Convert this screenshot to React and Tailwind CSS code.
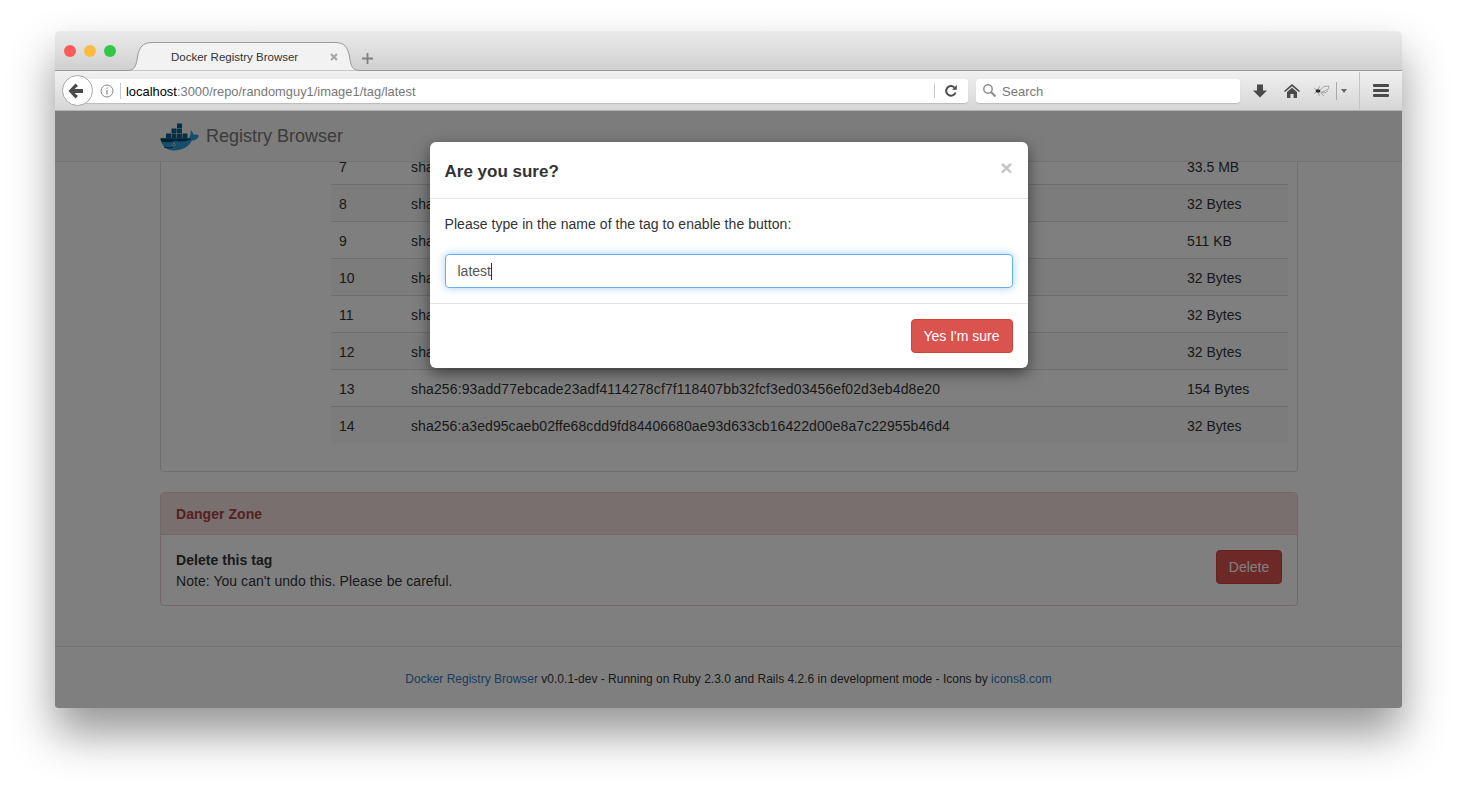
const rows = [
  { id: 7, hash: "sha", size: "33.5 MB", tracking: "tracking-[0.125px]" },
  { id: 8, hash: "sha", size: "32 Bytes", tracking: "tracking-[0.125px]" },
  { id: 9, hash: "sha", size: "511 KB", tracking: "tracking-[0.125px]" },
  { id: 10, hash: "sha", size: "32 Bytes", tracking: "tracking-[0.125px]" },
  { id: 11, hash: "sha", size: "32 Bytes", tracking: "tracking-[0.125px]" },
  { id: 12, hash: "sha", size: "32 Bytes", tracking: "tracking-[0.125px]" },
  { id: 13, hash: "sha256:93add77ebcade23adf4114278cf7f118407bb32fcf3ed03456ef02d3eb4d8e20", size: "154 Bytes", tracking: "tracking-[0.125px]" },
  { id: 14, hash: "sha256:a3ed95caeb02ffe68cdd9fd84406680ae93d633cb16422d00e8a7c22955b46d4", size: "32 Bytes", tracking: "tracking-[0.083px]" },
];

function DockerLogo() {
  return (
    <svg width="40" height="28" viewBox="0 0 40 28" className="mt-[1px]">
      <path d="M0.5 15 H29 C30.5 12.5 31 9.5 30.5 7 C32.5 8.5 33.5 10.5 33.5 12 C35.5 11.2 37.5 11.7 39 13 C37.5 16 35 17.5 32 17.5 C28.5 24 22 27.5 14 27.5 C6 27.5 1 22 0.5 15 Z" fill="#2a9fd8" />
      <path d="M0.5 15.5 H29 C30 15.5 31 16 31.5 16.5 C26 18.5 20 18.8 15 18 C10 19.5 5 19.5 1 18.5 Z" fill="#06405e" />
      <circle cx="14" cy="21.5" r="1.5" fill="#d8e6ee" />
      <circle cx="14" cy="21.5" r="0.7" fill="#06405e" />
      <path d="M4 24 C7 25 10 25 13 24.3" stroke="#06405e" strokeWidth="1" fill="none" />
      <path d="M17 0.5 H22 V5 H17 Z M11.5 5.5 H16.5 V10 H11.5 Z M17 5.5 H22 V10 H17 Z M6 10.5 H11 V15 H6 Z M11.5 10.5 H16.5 V15 H11.5 Z M17 10.5 H22 V15 H17 Z M22.5 10.5 H27.5 V15 H22.5 Z" fill="#0a5f8c" />
    </svg>
  );
}

function TabShape() {
  return (
    <svg className="absolute inset-0" width="237" height="29" viewBox="0 0 237 29">
      <path d="M0 28.5 H2 C10 28.5 11 24 12.5 15 C14 5 18 0.5 27 0.5 H210 C219 0.5 223 5 224.5 15 C226 24 227 28.5 235 28.5 H237" fill="#f2f2f2" stroke="#9a9a9a" />
    </svg>
  );
}

function ToolbarIcons() {
  return (
    <div className="flex items-center h-full ml-[13px]">
      <svg width="14" height="14" viewBox="0 0 14 14">
        <path d="M4 0.5 H10 V6.5 H14 L7 13.5 L0 6.5 H4 Z" fill="#4a4a4a" />
      </svg>
      <svg width="16" height="14" viewBox="0 0 16 14" className="ml-[17px]">
        <path d="M8 0 L16 7 L15 8 L8 2.2 L1 8 L0 7 Z M3 8 L8 3.8 L13 8 V14 H9.6 V10 H6.4 V14 H3 Z" fill="#4a4a4a" />
      </svg>
      <svg width="17" height="12" viewBox="0 0 17 12" className="ml-[13px]">
        <path d="M6 6 L11 1.5 L16 1 L15 4.5 L9 7 M7 7 L12 8 L15 6 M5 4 L7 1 M4 5 L1 3 M3 7 L1 9 M6 8 L6 11 M8 8 L11 11" stroke="#a6a6a6" strokeWidth="1" fill="none" />
        <ellipse cx="5" cy="6" rx="2.4" ry="1.8" fill="#2a2a2a" />
      </svg>
      <div className="w-px h-[18px] bg-[#a8a8a8] ml-[6px]" />
      <div className="ml-[4px] w-0 h-0 border-x-[3.5px] border-x-transparent border-t-[4px] border-t-[#666]" />
      <div className="w-px h-[37px] bg-[#c4c4c4] ml-[12px]" />
      <div className="ml-[13px] flex flex-col gap-[2px]">
        <div className="w-[16px] h-[3px] bg-[#4a4a4a] rounded-[1px]" />
        <div className="w-[16px] h-[3px] bg-[#4a4a4a] rounded-[1px]" />
        <div className="w-[16px] h-[3px] bg-[#4a4a4a] rounded-[1px]" />
      </div>
    </div>
  );
}

function BrowserChrome() {
  return (
    <>
      {/* Title bar */}
      <div className="h-[40px] flex bg-gradient-to-b from-[#ebebeb] to-[#d0d0d0] border-b border-[#9c9c9c] shrink-0">
        <div className="flex gap-2 pl-[9px] pt-[14px]">
          <div className="w-3 h-3 rounded-full bg-[#fc5b57]" />
          <div className="w-3 h-3 rounded-full bg-[#fdbc40]" />
          <div className="w-3 h-3 rounded-full bg-[#33c748]" />
        </div>
        <div className="relative ml-[9px] mt-[11px] w-[237px] h-[29px] text-[11.5px] text-[#333]">
          <TabShape />
          <span className="absolute left-[46px] top-[8px] leading-[14px] whitespace-nowrap">Docker Registry Browser</span>
          <svg width="8" height="8" viewBox="0 0 8 8" className="absolute left-[205px] top-[11px]">
            <path d="M1 1 L7 7 M7 1 L1 7" stroke="#a8a8a8" strokeWidth="2.2" />
          </svg>
        </div>
        <svg width="11" height="11" viewBox="0 0 11 11" className="mt-[22px]">
          <path d="M5.5 0 V11 M0 5.5 H11" stroke="#808080" strokeWidth="1.8" />
        </svg>
      </div>

      {/* Nav toolbar */}
      <div className="h-[40px] flex items-center bg-gradient-to-b from-[#f1f1f1] to-[#d6d6d6] border-b border-[#b4b4b4] shrink-0 pl-[7px] pr-[12px]">
        <div className="relative z-10 w-[31px] h-[31px] rounded-full bg-white border border-[#a8a8a8] flex items-center justify-center shrink-0">
          <svg width="16" height="16" viewBox="0 0 16 16" className="mr-[3px]">
            <path d="M7.5 0.5 L10 3 L6.5 6 H15 V10 H6.5 L10 13 L7.5 15.5 L0.5 8 Z" fill="#4a4a4a" />
          </svg>
        </div>
        <div className="-ml-[8px] w-[883px] h-[24px] bg-white rounded-r-[3px] flex items-center shadow-[0_1px_1px_rgba(0,0,0,0.15)] shrink-0">
          <svg width="14" height="14" viewBox="0 0 14 14" className="ml-[15px] shrink-0">
            <circle cx="7" cy="7" r="6" fill="none" stroke="#8a8a8a" />
            <path d="M7 6 V10.5 M7 3.5 V4.8" stroke="#8a8a8a" strokeWidth="1.2" />
          </svg>
          <div className="w-px h-[16px] bg-[#c8c8c8] ml-[6px]" />
          <div className="ml-[5px] pt-[2px] text-[12.9px] leading-4 text-[#777] whitespace-nowrap flex-1">
            <span className="text-black">localhost</span>:3000/repo/randomguy1/image1/tag/latest
          </div>
          <div className="w-px h-[14px] bg-[#c8c8c8]" />
          <svg width="14" height="14" viewBox="0 0 14 14" className="ml-[9px] mr-[10px]">
            <path d="M11.5 8.5 A4.8 4.8 0 1 1 10.3 3.4" fill="none" stroke="#4a4a4a" strokeWidth="2" />
            <path d="M8 5.8 H12.8 V1 Z" fill="#4a4a4a" />
          </svg>
        </div>
        <div className="ml-[8px] w-[264px] h-[24px] bg-white rounded-[3px] flex items-center shadow-[0_1px_1px_rgba(0,0,0,0.15)] shrink-0">
          <svg width="15" height="15" viewBox="0 0 15 15" className="ml-[6px]">
            <circle cx="6" cy="6" r="4.2" fill="none" stroke="#8c8c8c" strokeWidth="1.5" />
            <path d="M9.2 9.2 L13.5 13.5" stroke="#8c8c8c" strokeWidth="2" />
          </svg>
          <span className="ml-[5px] pt-[2px] text-[13px] leading-4 text-[#777]">Search</span>
        </div>
        <ToolbarIcons />
      </div>
    </>
  );
}

function ConfirmModal() {
  return (
    <div className="absolute inset-0 bg-black/50 z-20 flex justify-center pt-[31px]">
      <div className="w-[598px] h-[226px] bg-white rounded-[6px] shadow-[0_5px_15px_rgba(0,0,0,0.5)] flex flex-col">
        <div className="h-[57px] px-[15px] flex items-start justify-between border-b border-[#e5e5e5] shrink-0">
          <h4 className="mt-[20px] text-[17px] leading-[20px] font-bold text-[#333]">Are you sure?</h4>
          <span className="mt-[15px] text-[21px] leading-[21px] font-bold text-[#c4c4c4]">×</span>
        </div>
        <div className="h-[105px] px-[15px] pt-[15px] border-b border-[#e5e5e5] shrink-0">
          <p className="text-[14px] leading-[20px] text-[#333] tracking-[0.05px]">Please type in the name of the tag to enable the button:</p>
          <div className="mt-[20px] h-[34px] px-3 rounded-[4px] border border-[#66afe9] shadow-[0_0_8px_rgba(102,175,233,0.6)] flex items-center text-[14px] text-[#555]">
            latest
            <span className="w-px h-[17px] bg-[#333]" />
          </div>
        </div>
        <div className="flex justify-end px-[15px] pt-[15px]">
          <button className="w-[102px] h-[34px] rounded-[4px] bg-[#d9534f] border border-[#d43f3a] text-white text-[14px]">
            Yes I'm sure
          </button>
        </div>
      </div>
    </div>
  );
}

export default function App() {
  return (
    <div className="h-[787px] overflow-hidden bg-white px-[55px] pt-[31px] font-['Liberation_Sans',Arial,sans-serif]">
      <div className="w-[1347px] h-[677px] flex flex-col rounded-t-[5px] rounded-b-[3px] overflow-hidden shadow-[0_25px_45px_rgba(0,0,0,0.42)]">
        <BrowserChrome />

        {/* Page */}
        <div className="relative flex-1 bg-white overflow-hidden flex flex-col">
          <div className="relative z-10 h-[51px] bg-[#f8f8f8] border-b border-[#e7e7e7] pl-[105px] flex items-center shrink-0">
            <DockerLogo />
            <span className="ml-[6px] text-[18px] text-[#777]">Registry Browser</span>
          </div>

          <div className="pl-[105px] pr-[104px] flex-1 flex flex-col">
            {/* Layers panel, scrolled under the navbar */}
            <div className="-mt-[16px] h-[326px] border border-[#ddd] rounded-[4px] pl-[170px] pr-[9px] shrink-0">
              <table className="w-full table-fixed text-[14px] leading-[20px] text-[#333]">
                <colgroup>
                  <col className="w-[72px]" />
                  <col />
                  <col className="w-[109px]" />
                </colgroup>
                <tbody>
                  {rows.map((row, i) => (
                    <tr key={row.id} className={i % 2 === 1 ? "bg-[#f9f9f9]" : ""}>
                      <td className="px-2 pt-[9px] pb-[7px] border-t border-[#ddd]">{row.id}</td>
                      <td className={`px-2 pt-[9px] pb-[7px] border-t border-[#ddd] whitespace-nowrap ${row.tracking}`}>{row.hash}</td>
                      <td className="px-2 pt-[9px] pb-[7px] border-t border-[#ddd]">{row.size}</td>
                    </tr>
                  ))}
                </tbody>
              </table>
            </div>

            {/* Danger zone */}
            <div className="mt-[20px] h-[114px] border border-[#ebccd1] rounded-[4px] overflow-hidden shrink-0">
              <div className="h-[42px] bg-[#f2dede] border-b border-[#ebccd1] px-[15px] pt-[1px] flex items-center text-[14px] font-bold text-[#a94442] tracking-[0.05px]">
                Danger Zone
              </div>
              <div className="flex items-start justify-between px-[15px] pt-[15px] text-[14px] leading-[21px] text-[#333]">
                <div className="tracking-[0.05px]">
                  <div className="font-bold">Delete this tag</div>
                  <div>Note: You can't undo this. Please be careful.</div>
                </div>
                <button className="w-[66px] h-[34px] rounded-[4px] bg-[#d9534f] border border-[#d43f3a] text-white text-[14px]">
                  Delete
                </button>
              </div>
            </div>
          </div>

          <div className="h-[62px] pt-[3px] border-t border-[#e7e7e7] flex items-center justify-center text-[12px] text-[#333] shrink-0">
            <span>
              <span className="text-[#337ab7]">Docker Registry Browser</span> v0.0.1-dev - Running on Ruby 2.3.0 and Rails 4.2.6 in development mode - Icons by <span className="text-[#337ab7]">icons8.com</span>
            </span>
          </div>

          <ConfirmModal />
        </div>
      </div>
    </div>
  );
}
